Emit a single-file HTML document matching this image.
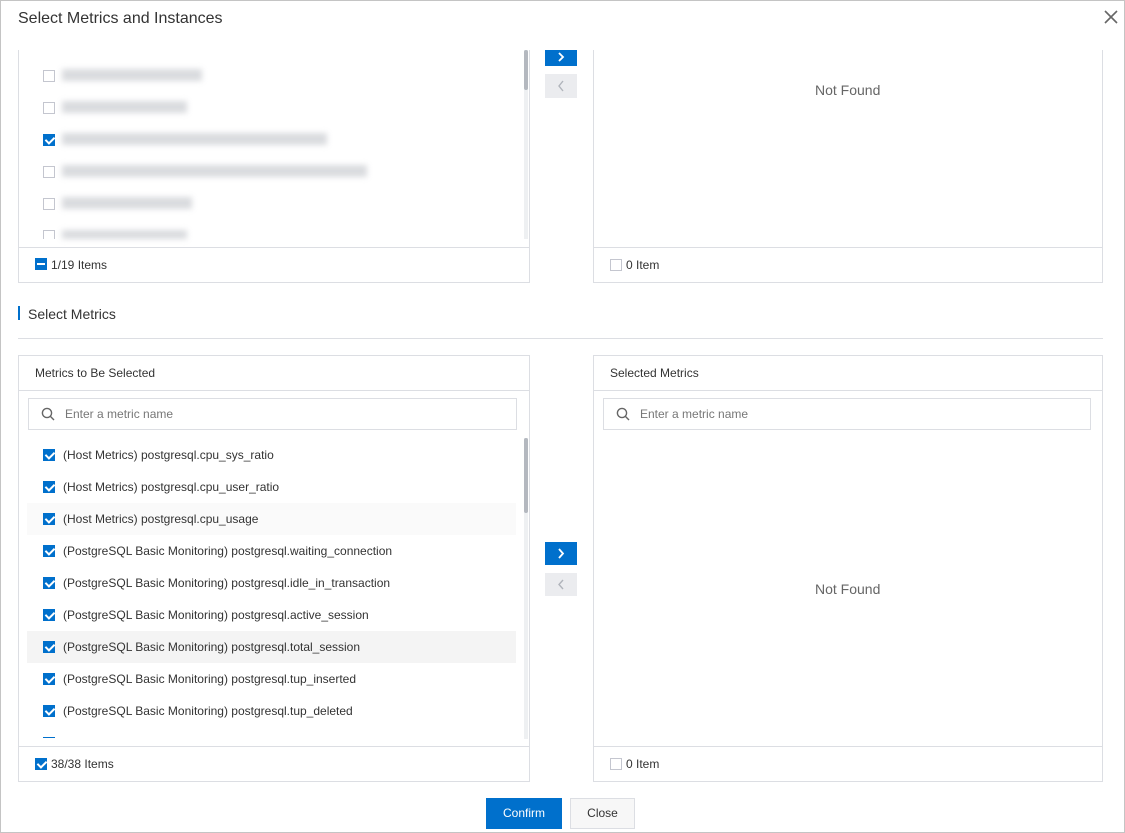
<!DOCTYPE html>
<html><head><meta charset="utf-8"><style>
*{margin:0;padding:0;box-sizing:border-box}
body{width:1125px;height:833px;position:relative;background:#fff;font-family:"Liberation Sans",Arial,sans-serif;color:#333;overflow:hidden}
.a{position:absolute}
.panel{position:absolute;border:1px solid #dcdee3;background:#fff}
.cb{position:absolute;width:12px;height:12px;border:1px solid #c4c6cf;background:#fff}
.cb.on{background:#0070cc;border-color:#0070cc}
.cb.on:after{content:"";position:absolute;left:3px;top:0px;width:4px;height:7px;border:solid #fff;border-width:0 2px 2px 0;transform:rotate(45deg)}
.blur{position:absolute;height:12px;background:#d3d5d9;filter:blur(3px);opacity:.85}
.row{position:absolute;left:8px;width:489px;height:32px;font-size:12px;line-height:32px}
.row .cb{left:16px;top:10px}
.row span{position:absolute;left:36px}
.btn{position:absolute;width:32px;height:23px}
.blue{background:#0070cc}
.grey{background:#ebecef}
.sb{position:absolute;width:4px;background:#eef0f2}
.sb i{position:absolute;left:0;width:4px;background:#b4b8bf;border-radius:2px}
</style></head><body>
<div class="a" style="left:0;top:0;width:1125px;height:833px;border:1px solid #c4c4c4"></div>
<div class="a" style="left:18px;top:10px;font-size:16px;color:#333">Select Metrics and Instances</div>
<svg class="a" style="left:1104px;top:10px" width="14" height="14"><path d="M1 1L13 13M13 1L1 13" stroke="#666" stroke-width="1.6"/></svg>

<div class="panel" style="left:18px;top:50px;width:512px;height:233px;border-top:none"></div>
<div class="cb" style="left:43px;top:70px"></div><div class="blur" style="left:62px;top:69px;width:140px"></div>
<div class="cb" style="left:43px;top:102px"></div><div class="blur" style="left:62px;top:101px;width:125px"></div>
<div class="cb on" style="left:43px;top:134px"></div><div class="blur" style="left:62px;top:133px;width:265px"></div>
<div class="cb" style="left:43px;top:166px"></div><div class="blur" style="left:62px;top:165px;width:305px"></div>
<div class="cb" style="left:43px;top:198px"></div><div class="blur" style="left:62px;top:197px;width:130px"></div>
<div class="cb" style="left:43px;top:230px;height:9px;border-bottom:none"></div><div class="blur" style="left:62px;top:230px;width:125px;height:9px"></div>
<div class="sb" style="left:524px;top:50px;height:189px"><i style="top:0;height:40px"></i></div>
<div class="a" style="left:19px;top:247px;width:510px;height:1px;background:#dcdee3"></div>
<div class="a" style="left:35px;top:258px;width:12px;height:12px;background:#0070cc"><i style="position:absolute;left:2px;top:5px;width:8px;height:2px;background:#fff"></i></div>
<div class="a" style="left:51px;top:258px;font-size:12px">1/19 Items</div>

<div class="btn blue" style="left:545px;top:50px;height:16px"><svg width="32" height="16"><path d="M14 3l4 4-4 4" stroke="#fff" stroke-width="1.8" fill="none"/></svg></div>
<div class="btn grey" style="left:545px;top:74px;height:24px"><svg width="32" height="24"><path d="M18 7l-4 5 4 5" stroke="#b0b4bb" stroke-width="1.4" fill="none"/></svg></div>

<div class="panel" style="left:593px;top:50px;width:510px;height:233px;border-top:none"></div>
<div class="a" style="left:815px;top:82px;font-size:14px;color:#666">Not Found</div>
<div class="a" style="left:594px;top:247px;width:508px;height:1px;background:#dcdee3"></div>
<div class="cb" style="left:610px;top:259px"></div>
<div class="a" style="left:626px;top:258px;font-size:12px">0 Item</div>

<div class="a" style="left:18px;top:306px;width:2px;height:14px;background:#0070cc"></div>
<div class="a" style="left:28px;top:306px;font-size:14px">Select Metrics</div>
<div class="a" style="left:18px;top:338px;width:1085px;height:1px;background:#dcdee3"></div>

<div class="panel" style="left:18px;top:355px;width:512px;height:427px">
 <div class="a" style="left:16px;top:10px;font-size:12px">Metrics to Be Selected</div>
 <div class="a" style="left:0;top:34px;width:510px;height:1px;background:#dcdee3"></div>
 <div class="a" style="left:9px;top:42px;width:489px;height:32px;border:1px solid #dcdee3"></div>
 <svg class="a" style="left:22px;top:51px" width="14" height="14"><circle cx="6" cy="6" r="4.6" stroke="#666" stroke-width="1.4" fill="none"/><path d="M9.4 9.4L13 13" stroke="#666" stroke-width="1.4"/></svg>
 <div class="a" style="left:46px;top:51px;font-size:12px;color:#777">Enter a metric name</div>
 <div class="row" style="top:83px"><div class="cb on"></div><span>(Host Metrics) postgresql.cpu_sys_ratio</span></div>
 <div class="row" style="top:115px"><div class="cb on"></div><span>(Host Metrics) postgresql.cpu_user_ratio</span></div>
 <div class="row" style="top:147px;background:#fafafa"><div class="cb on"></div><span>(Host Metrics) postgresql.cpu_usage</span></div>
 <div class="row" style="top:179px"><div class="cb on"></div><span>(PostgreSQL Basic Monitoring) postgresql.waiting_connection</span></div>
 <div class="row" style="top:211px"><div class="cb on"></div><span>(PostgreSQL Basic Monitoring) postgresql.idle_in_transaction</span></div>
 <div class="row" style="top:243px"><div class="cb on"></div><span>(PostgreSQL Basic Monitoring) postgresql.active_session</span></div>
 <div class="row" style="top:275px;background:#f4f4f4"><div class="cb on"></div><span>(PostgreSQL Basic Monitoring) postgresql.total_session</span></div>
 <div class="row" style="top:307px"><div class="cb on"></div><span>(PostgreSQL Basic Monitoring) postgresql.tup_inserted</span></div>
 <div class="row" style="top:339px"><div class="cb on"></div><span>(PostgreSQL Basic Monitoring) postgresql.tup_deleted</span></div>
 <div class="a" style="left:24px;top:381px;width:12px;height:1px;background:#0070cc"></div>
 <div class="sb" style="left:505px;top:82px;height:301px"><i style="top:0;height:75px"></i></div>
 <div class="a" style="left:0;top:390px;width:510px;height:1px;background:#dcdee3"></div>
 <div class="cb on" style="left:16px;top:402px"></div>
 <div class="a" style="left:32px;top:401px;font-size:12px">38/38 Items</div>
</div>

<div class="btn blue" style="left:545px;top:542px"><svg width="32" height="23"><path d="M14 7l4 4.5-4 4.5" stroke="#fff" stroke-width="1.8" fill="none"/></svg></div>
<div class="btn grey" style="left:545px;top:573px"><svg width="32" height="23"><path d="M18 7l-4 4.5 4 4.5" stroke="#b0b4bb" stroke-width="1.4" fill="none"/></svg></div>

<div class="panel" style="left:593px;top:355px;width:510px;height:427px">
 <div class="a" style="left:16px;top:10px;font-size:12px">Selected Metrics</div>
 <div class="a" style="left:0;top:34px;width:508px;height:1px;background:#dcdee3"></div>
 <div class="a" style="left:9px;top:42px;width:488px;height:32px;border:1px solid #dcdee3"></div>
 <svg class="a" style="left:22px;top:51px" width="14" height="14"><circle cx="6" cy="6" r="4.6" stroke="#666" stroke-width="1.4" fill="none"/><path d="M9.4 9.4L13 13" stroke="#666" stroke-width="1.4"/></svg>
 <div class="a" style="left:46px;top:51px;font-size:12px;color:#777">Enter a metric name</div>
 <div class="a" style="left:221px;top:225px;font-size:14px;color:#666">Not Found</div>
 <div class="a" style="left:0;top:390px;width:508px;height:1px;background:#dcdee3"></div>
 <div class="cb" style="left:16px;top:402px"></div>
 <div class="a" style="left:32px;top:401px;font-size:12px">0 Item</div>
</div>

<div class="a" style="left:486px;top:798px;width:76px;height:31px;background:#0070cc;color:#fff;font-size:12px;text-align:center;line-height:31px">Confirm</div>
<div class="a" style="left:570px;top:798px;width:65px;height:31px;background:#f7f7f7;border:1px solid #dcdee3;color:#333;font-size:12px;text-align:center;line-height:29px">Close</div>
</body></html>
